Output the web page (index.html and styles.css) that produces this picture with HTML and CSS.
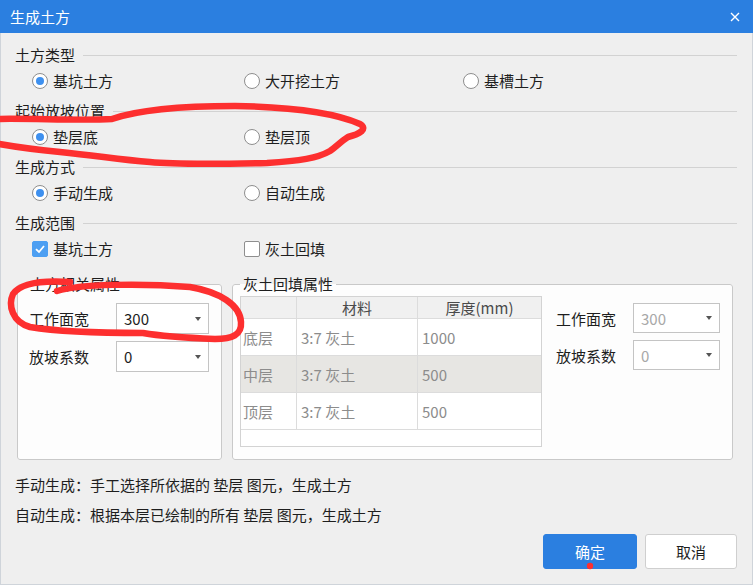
FILE: index.html
```html
<!DOCTYPE html>
<html lang="zh-CN">
<head>
<meta charset="utf-8">
<title>生成土方</title>
<link rel="stylesheet" href="styles.css">
</head>
<body>
<div class="window">
  <div class="titlebar">
    <span class="title">生成土方</span>
    <svg class="close" width="10" height="10" viewBox="0 0 10 10"><path d="M1 1 L9 9 M9 1 L1 9" stroke="#fff" stroke-width="1.4" fill="none"/></svg>
  </div>
  <div class="body">
    <section class="sec">
      <div class="sec-head"><span>土方类型</span></div>
      <div class="opts">
        <label class="opt"><span class="radio on"></span>基坑土方</label>
        <label class="opt"><span class="radio"></span>大开挖土方</label>
        <label class="opt"><span class="radio"></span>基槽土方</label>
      </div>
    </section>
    <section class="sec">
      <div class="sec-head"><span>起始放坡位置</span></div>
      <div class="opts">
        <label class="opt"><span class="radio on"></span>垫层底</label>
        <label class="opt"><span class="radio"></span>垫层顶</label>
      </div>
    </section>
    <section class="sec">
      <div class="sec-head"><span>生成方式</span></div>
      <div class="opts">
        <label class="opt"><span class="radio on"></span>手动生成</label>
        <label class="opt"><span class="radio"></span>自动生成</label>
      </div>
    </section>
    <section class="sec">
      <div class="sec-head"><span>生成范围</span></div>
      <div class="opts">
        <label class="opt"><span class="check on"><svg width="12" height="12" viewBox="0 0 12 12"><path d="M2 6.2 L5 9 L10 3" stroke="#fff" stroke-width="1.8" fill="none"/></svg></span>基坑土方</label>
        <label class="opt"><span class="check"></span>灰土回填</label>
      </div>
    </section>

    <div class="groups">
      <fieldset class="grp grp-left">
        <legend>土方相关属性</legend>
        <div class="field"><span class="flabel">工作面宽</span><div class="combo"><span>300</span><i class="arrow"></i></div></div>
        <div class="field"><span class="flabel">放坡系数</span><div class="combo"><span>0</span><i class="arrow"></i></div></div>
      </fieldset>
      <fieldset class="grp grp-right">
        <legend>灰土回填属性</legend>
        <div class="grp-inner">
          <div class="tbl">
            <div class="c hd"></div><div class="c hd ctr">材料</div><div class="c hd ctr">厚度(mm)</div>
            <div class="c rh">底层</div><div class="c">3:7 灰土</div><div class="c">1000</div>
            <div class="c rh alt">中层</div><div class="c alt">3:7 灰土</div><div class="c alt">500</div>
            <div class="c rh">顶层</div><div class="c">3:7 灰土</div><div class="c">500</div>
          </div>
          <div class="rfields">
            <div class="field"><span class="flabel r">工作面宽</span><div class="combo r dis"><span>300</span><i class="arrow"></i></div></div>
            <div class="field"><span class="flabel r">放坡系数</span><div class="combo r dis"><span>0</span><i class="arrow"></i></div></div>
          </div>
        </div>
      </fieldset>
    </div>

    <div class="notes">
      <p>手动生成：手工选择所依据的 垫层 图元，生成土方</p>
      <p>自动生成：根据本层已绘制的所有 垫层 图元，生成土方</p>
    </div>

    <div class="buttons">
      <button class="btn primary">确定</button>
      <button class="btn cancel">取消</button>
    </div>
  </div>

  <svg class="annot" width="753" height="585" viewBox="0 0 753 585">
    <path d="M -6 119 C 30 118, 80 121, 112 119 C 135 111, 170 106, 235 106 C 290 107, 335 113, 360 124 C 368 129, 360 134, 348 137 C 340 142, 336 147, 330 151 C 318 158, 300 161, 267 163 C 220 164, 170 164, 150 162 C 120 160, 100 156, 60 152 C 30 149, 10 146, -6 143" fill="none" stroke="#fd2f2f" stroke-width="6.5" stroke-linecap="round" stroke-linejoin="round"/>
    <path d="M 57 291 C 80 284, 140 283, 190 287 C 220 292, 240 305, 241 322 C 242 335, 232 339, 215 339 C 190 338, 160 336, 143 333 C 110 333, 60 332, 30 327 C 12 322, 8 305, 13 294 C 20 284, 40 280, 70 282" fill="none" stroke="#fd2f2f" stroke-width="6.5" stroke-linecap="round" stroke-linejoin="round"/>
    <circle cx="590" cy="566" r="3.2" fill="#fd2f2f"/>
  </svg>
</div>
</body>
</html>
```

FILE: styles.css
```css
* { box-sizing: border-box; }

body {
  margin: 0;
  background: #efefef;
  font-family: "Noto Sans CJK SC", "Noto Sans", sans-serif;
  font-size: 15px;
  color: #1e1e1e;
}

.window {
  position: relative;
  width: 753px;
  height: 585px;
  overflow: hidden;
  background: #efefef;
}

.titlebar {
  height: 33px;
  background: #2b7fe0;
  color: #fff;
  display: flex;
  align-items: center;
  justify-content: space-between;
  padding: 0 13px 0 10px;
}

.title {
  font-size: 15px;
  line-height: 20px;
}

.close { display: block; }

.body {
  height: 552px;
  padding: 11px 15px 0 14px;
  border-left: 1px solid #cfd4da;
  border-right: 1px solid #cfd4da;
  border-bottom: 1px solid #cfd4da;
}

.sec-head {
  display: flex;
  align-items: center;
  height: 22px;
  line-height: 22px;
  white-space: nowrap;
}

.sec-head::after {
  content: "";
  flex: 1;
  height: 1px;
  background: #d2d2d2;
  margin-left: 8px;
}

.opts {
  display: grid;
  grid-template-columns: 212px 219px 1fr;
  align-items: center;
  height: 30px;
  margin-bottom: 4px;
  padding-left: 17px;
}

.opt {
  display: flex;
  align-items: center;
  gap: 5px;
  white-space: nowrap;
  line-height: 20px;
}

.radio {
  width: 16px;
  height: 16px;
  border: 1px solid #8e8e8e;
  border-radius: 50%;
  background: #fff;
  display: grid;
  place-items: center;
  flex: none;
}

.radio.on::after {
  content: "";
  width: 8px;
  height: 8px;
  border-radius: 50%;
  background: #3e90ef;
}

.check {
  width: 16px;
  height: 16px;
  border: 1px solid #8e8e8e;
  border-radius: 2px;
  background: #fff;
  display: grid;
  place-items: center;
  flex: none;
}

.check.on {
  background: #4d9ff2;
  border-color: #4d9ff2;
}

.check svg { display: block; }

.groups {
  display: flex;
  gap: 10px;
  margin: 10px 4px 0 2px;
}

.grp {
  margin: 0;
  min-width: 0;
  height: 186px;
  border: 1px solid #c9c9c9;
  border-radius: 3px;
  background: #fdfdfd;
}

.grp legend {
  padding: 0 2px;
  line-height: 20px;
  font-size: 15px;
}

.grp-left {
  width: 205px;
  flex: none;
  padding: 9px 10px 0 10px;
}

.grp-right {
  flex: 1;
  padding: 2px 10px 0 7px;
}

.grp-right legend { padding: 0 3px; }

.grp-inner {
  display: flex;
  align-items: flex-start;
}

.field {
  display: flex;
  align-items: center;
  margin-bottom: 7px;
}

.flabel {
  width: 88px;
  padding-left: 1px;
  white-space: nowrap;
}

.flabel.r {
  width: 77px;
  padding-left: 0;
}

.combo {
  width: 93px;
  height: 31px;
  border: 1px solid #c4c4c4;
  background: #fff;
  display: flex;
  align-items: center;
  justify-content: space-between;
  padding: 0 7px 0 7px;
  color: #1e1e1e;
}

.combo.r {
  width: 87px;
  height: 30px;
}

.combo.dis { color: #a8a8a8; }

.arrow {
  width: 0;
  height: 0;
  border-left: 3.5px solid transparent;
  border-right: 3.5px solid transparent;
  border-top: 4px solid #555;
}

.tbl {
  width: 302px;
  height: 151px;
  flex: none;
  border: 1px solid #d3d3d3;
  background: #fff;
  display: grid;
  grid-template-columns: 56px 121px 1fr;
  grid-template-rows: 22px 37px 37px 37px;
  align-content: start;
}

.c {
  border-right: 1px solid #dcdcdc;
  border-bottom: 1px solid #dcdcdc;
  display: flex;
  align-items: center;
  padding-left: 4px;
  color: #8c8c8c;
  white-space: nowrap;
}

.c:nth-child(3n) { border-right: none; }

.c.hd {
  background: #f0f0f0;
  color: #4a4a4a;
}

.c.ctr {
  justify-content: center;
  padding-left: 0;
}

.c.rh { padding-left: 2px; }

.c.alt { background: #e7e6e3; }

.rfields {
  margin-left: 14px;
  padding-top: 7px;
}

.notes {
  margin-top: 10px;
}

.notes p {
  margin: 0;
  line-height: 30px;
  white-space: nowrap;
}

.buttons {
  display: flex;
  justify-content: flex-end;
  gap: 8px;
  margin-top: 4px;
}

.btn {
  height: 35px;
  border-radius: 3px;
  font-family: inherit;
  font-size: 15px;
  padding: 0;
}

.btn.primary {
  width: 94px;
  background: #2b7fe0;
  border: 1px solid #2b7fe0;
  color: #fff;
}

.btn.cancel {
  width: 92px;
  background: #fff;
  border: 1px solid #cfcfcf;
  color: #1e1e1e;
}

.annot {
  position: absolute;
  top: 0;
  left: 0;
  pointer-events: none;
}
```
